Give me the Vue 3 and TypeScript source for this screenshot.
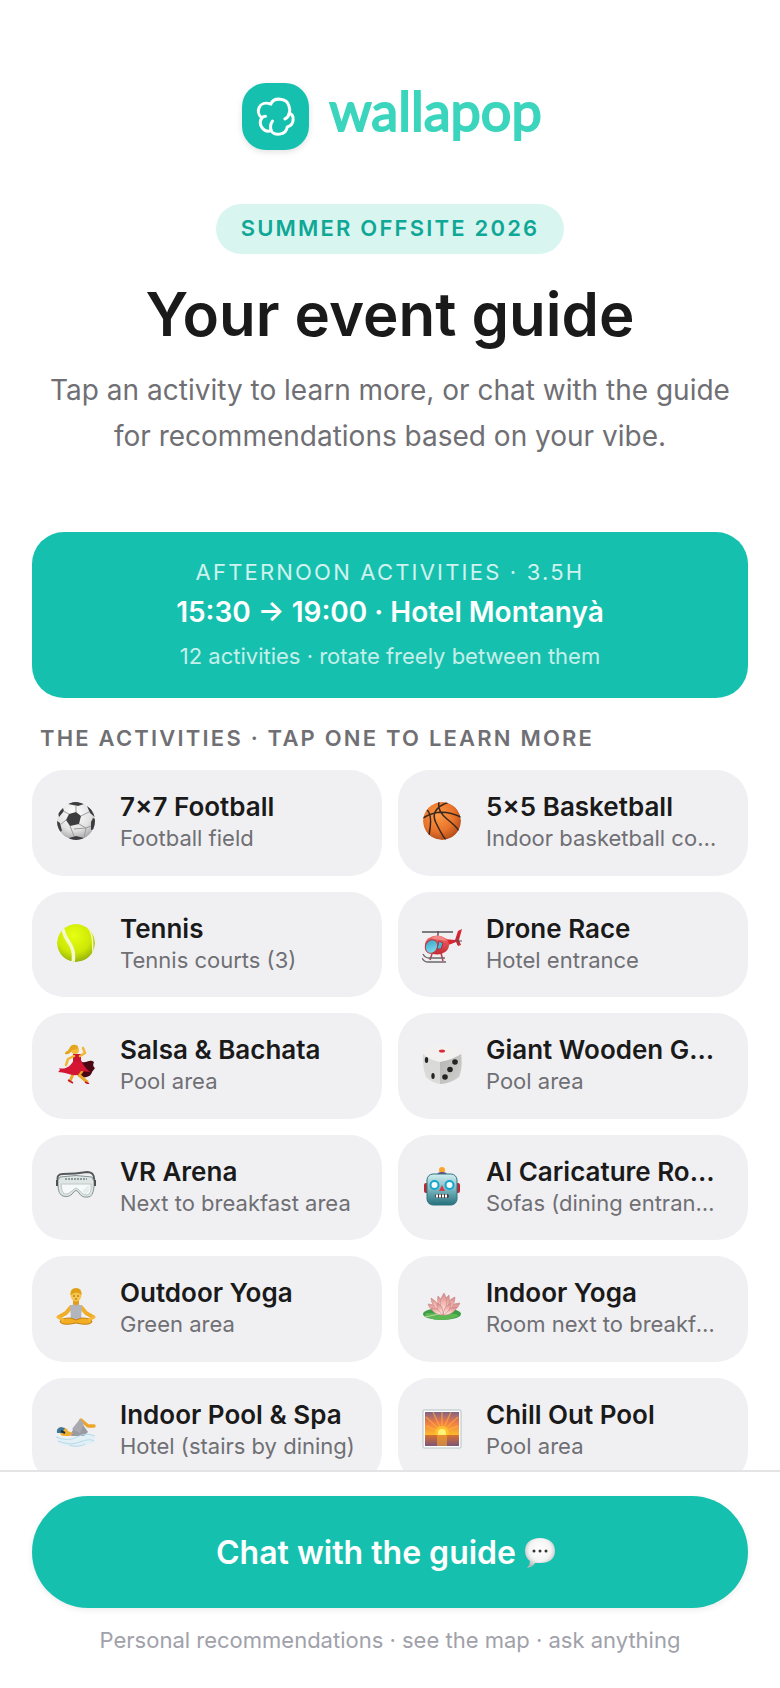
<script setup lang="ts">
import { ref } from 'vue'

interface Activity {
  icon: string
  name: string
  place: string
}

const activities: Activity[] = [
  { icon: 'football', name: '7×7 Football', place: 'Football field' },
  { icon: 'basketball', name: '5×5 Basketball', place: 'Indoor basketball court' },
  { icon: 'tennis', name: 'Tennis', place: 'Tennis courts (3)' },
  { icon: 'helicopter', name: 'Drone Race', place: 'Hotel entrance' },
  { icon: 'dancer', name: 'Salsa & Bachata', place: 'Pool area' },
  { icon: 'dice', name: 'Giant Wooden Games', place: 'Pool area' },
  { icon: 'goggles', name: 'VR Arena', place: 'Next to breakfast area' },
  { icon: 'robot', name: 'AI Caricature Robot', place: 'Sofas (dining entrance)' },
  { icon: 'yoga', name: 'Outdoor Yoga', place: 'Green area' },
  { icon: 'lotus', name: 'Indoor Yoga', place: 'Room next to breakfast' },
  { icon: 'swimmer', name: 'Indoor Pool & Spa', place: 'Hotel (stairs by dining)' },
  { icon: 'sunset', name: 'Chill Out Pool', place: 'Pool area' },
]

const selected = ref<string | null>(null)
</script>

<template>
  <div class="page">
    <main class="content">
      <header class="intro">
        <div class="brand">
          <span class="brand-mark">
            <svg viewBox="0 0 200 200" aria-hidden="true">
              <g fill="none" stroke="#fff" stroke-width="9" stroke-linecap="round" stroke-linejoin="round">
                <path d="M86 63C94 42 134 43 140 68C143 76 143 84 141 90C158 96 157 126 135 131C132 158 93 158 87 142C66 150 46 125 59 104C38 87 51 50 86 63Z" />
                <path d="M141 90Q139 102 128 107M87 142Q82 126 91 114M59 104Q64 99 70 99" />
              </g>
            </svg>
          </span>
          <span class="wordmark">wallapop</span>
        </div>
        <p class="badge">SUMMER OFFSITE 2026</p>
        <h1>Your event guide</h1>
        <p class="lead">Tap an activity to learn more, or chat with the guide for recommendations based on your vibe.</p>
      </header>

      <section class="banner">
        <p class="banner-label">AFTERNOON ACTIVITIES · 3.5H</p>
        <p class="banner-time">15:30 → 19:00 · Hotel Montanyà</p>
        <p class="banner-note">12 activities · rotate freely between them</p>
      </section>

      <h2>THE ACTIVITIES · TAP ONE TO LEARN MORE</h2>
      <div class="grid">
        <button v-for="a in activities" :key="a.name" type="button" class="card" @click="selected = a.name">
          <svg class="icon" viewBox="0 0 40 40" aria-hidden="true">
            <defs>
              <radialGradient id="ballWhite" cx=".45" cy=".3" r=".75"><stop offset="0" stop-color="#fff" /><stop offset=".6" stop-color="#e2e2e2" /><stop offset="1" stop-color="#9c9c9c" /></radialGradient>
              <radialGradient id="ballOrange" cx=".4" cy=".35" r=".7"><stop offset="0" stop-color="#fb9a48" /><stop offset=".6" stop-color="#e8732a" /><stop offset="1" stop-color="#ae4a1b" /></radialGradient>
              <radialGradient id="ballLime" cx=".45" cy=".3" r=".75"><stop offset="0" stop-color="#e6ff12" /><stop offset=".6" stop-color="#cde805" /><stop offset="1" stop-color="#8da810" /></radialGradient>
              <linearGradient id="redBody" x1="0" y1="0" x2="0" y2="1"><stop offset="0" stop-color="#f2696a" /><stop offset="1" stop-color="#c42b34" /></linearGradient>
              <linearGradient id="glassBlue" x1="0" y1="0" x2="1" y2="1"><stop offset="0" stop-color="#2f9fc2" /><stop offset="1" stop-color="#8ee6f7" /></linearGradient>
              <linearGradient id="robotFace" x1="0" y1="0" x2="0" y2="1"><stop offset="0" stop-color="#d2eff0" /><stop offset=".5" stop-color="#79b7bf" /><stop offset="1" stop-color="#25707c" /></linearGradient>
              <linearGradient id="dieSide" x1="0" y1="0" x2="1" y2="1"><stop offset="0" stop-color="#b4b4b2" /><stop offset="1" stop-color="#d0d0ce" /></linearGradient>
              <linearGradient id="petal" x1="0" y1="0" x2="0" y2="1"><stop offset="0" stop-color="#cf8585" /><stop offset=".45" stop-color="#f3b5b0" /><stop offset="1" stop-color="#fdf3f0" /></linearGradient>
              <linearGradient id="sky" x1="0" y1="0" x2="0" y2="1"><stop offset="0" stop-color="#806286" /><stop offset=".45" stop-color="#f07a46" /><stop offset="1" stop-color="#fdbb2c" /></linearGradient>
              <linearGradient id="sea" x1="0" y1="0" x2="0" y2="1"><stop offset="0" stop-color="#d9702f" /><stop offset="1" stop-color="#7c5678" /></linearGradient>
              <clipPath id="ballClip"><circle cx="20" cy="20" r="19" /></clipPath>
            </defs>

            <g v-if="a.icon === 'football'" clip-path="url(#ballClip)">
              <circle cx="20" cy="20" r="19" fill="url(#ballWhite)" />
              <g fill="#3d3d3f">
                <path d="M13 13L20 11L25 15L23 23L14 25L10 19Z" />
                <path d="M12 3L19 0L28 3L22 5L17 4ZM31 5L40 12V17L34 12ZM35 21L37 17L40 18V28L35 29ZM13 37L20 35L28 37L24 40H15ZM1 20L4 22L6 30L3 31L0 24ZM2 12L7 7L8 10L3 16Z" />
              </g>
              <path d="M13 13L7 10M20 11L20 4M25 15L33 11M23 23L30 27L35 25M14 25L18 35M10 19L4 24M18 28L30 27L28 37" fill="none" stroke="#9b9b9b" />
            </g>

            <g v-else-if="a.icon === 'basketball'" clip-path="url(#ballClip)">
              <circle cx="20" cy="20" r="19" fill="url(#ballOrange)" />
              <path d="M1 17Q18 6 39 16M27 1Q7 8 14 22T24 39M17 1Q15 10 25 18T37 30M5 9Q11 14 7 34" fill="none" stroke="#39271d" stroke-width="1.500" />
            </g>

            <g v-else-if="a.icon === 'tennis'" clip-path="url(#ballClip)">
              <circle cx="20" cy="20" r="19" fill="url(#ballLime)" />
              <path d="M7 6C9 20 20 20 17 40" fill="none" stroke="#f5f8cf" stroke-width="3.500" />
              <path d="M31 3C38 11 36 20 37 30" fill="none" stroke="#f2f6c4" stroke-width="1.500" />
            </g>

            <g v-else-if="a.icon === 'helicopter'">
              <path d="M0 9H31M16 8V14" stroke="#55555b" stroke-width="1.500" />
              <path d="M22 16L33 17L36 8L40 6L37 17L39 22L36 23L34 19L24 23Z" fill="#d9252f" />
              <path d="M36 13V22M33 18H40" stroke="#6f4a52" />
              <ellipse cx="15" cy="22" rx="12" ry="9.500" fill="url(#redBody)" />
              <path d="M9 15Q16 10 22 15L25 18L12 16Z" fill="#f38686" />
              <ellipse cx="9.500" cy="23.500" rx="6" ry="7" transform="rotate(30 9.500 23.500)" fill="url(#glassBlue)" stroke="#b83840" />
              <path d="M17 18L21 20L19 26L15 26Z" fill="#45b8d5" stroke="#b52c36" />
              <path d="M10 31L8 37M19 30L21 38" stroke="#bf3b41" stroke-width="1.500" />
              <path d="M1 31Q3 35 7 35H23M0 35Q2 39 6 39H24" fill="none" stroke="#6b6669" stroke-width="1.300" />
            </g>

            <g v-else-if="a.icon === 'dancer'">
              <path d="M24 17C30 21 33 14 38 18Q36 22 39 24L36 28C35 33 28 35 22 32Z" fill="#4a0613" />
              <path d="M18 28L14 37M26 27L23 31L31 38" fill="none" stroke="#e9a629" stroke-width="3" stroke-linecap="round" />
              <path d="M18 16L25 16C27 21 30 25 34 28L25 27L22 31C15 32 9 28 2 28Q5 26 3 24C9 26 14 23 18 16Z" fill="#d51632" />
              <path d="M17 10L25 10L25 18H17Z" fill="#cc1430" />
              <path d="M12 36L17 39M29 38L33 40" stroke="#c5162e" stroke-width="1.500" />
              <path d="M18 12L12 15L10 21M24 12L29 9L27 4" fill="none" stroke="#f1b634" stroke-width="2.500" stroke-linecap="round" stroke-linejoin="round" />
              <circle cx="19" cy="6" r="4" fill="#f4bc3d" />
              <path d="M22 2C17-1 14 2 13 5C11 8 9 7 9 10C12 11 15 9 16 6L21 5Z" fill="#e2a61f" />
            </g>

            <g v-else-if="a.icon === 'dice'">
              <path d="M1 9Q10 14 18 17L19 40Q10 39 4 33Q0 22 1 9Z" fill="#dadad8" />
              <path d="M18 16Q30 13 39 9Q41 24 37 33Q28 40 18 40Z" fill="url(#dieSide)" />
              <path d="M1 10Q1 7 4 6Q14 1 20 2Q31 2 37 6Q39 7 39 10Q32 15 18 18Q6 15 1 10Z" fill="#f2f1ef" />
              <ellipse cx="20" cy="7" rx="3" ry="1.500" fill="#dd2a32" />
              <g fill="#242424"><ellipse cx="4.500" cy="16" rx="1.700" ry="3" /><ellipse cx="11" cy="32" rx="1.700" ry="3" /><circle cx="33" cy="18" r="2.800" /><circle cx="28" cy="25.500" r="2.800" /><circle cx="23" cy="33" r="2.800" /></g>
            </g>

            <g v-else-if="a.icon === 'goggles'">
              <path d="M2 15Q0 8 7 8Q20 8 31 6Q39 6 38 15" fill="none" stroke="#55595b" stroke-width="2" />
              <path d="M4 11Q20 8 36 11Q39 15 38 21Q37 31 32 31Q26 32 23 27Q20 22 17 27Q13 32 7 30Q2 28 2 19Q1 14 4 11Z" fill="#dfe5e5" stroke="#849394" />
              <path d="M5 18H35Q36 28 31 29Q26 29 23 24Q20 20 16 25Q12 29 8 28Q5 25 5 18Z" fill="#f6f9f9" stroke="#bdc7c7" />
              <path d="M9 13H31" stroke="#8c9a9c" stroke-width="2" stroke-dasharray="2 1" />
              <path d="M1 14V20M39 14V20" stroke="#4e5253" stroke-width="2" />
              <path d="M26 25L33 19V25L30 28Z" fill="#e5eded" />
            </g>

            <g v-else-if="a.icon === 'robot'">
              <circle cx="20" cy="4" r="3" fill="#f9a52b" />
              <path d="M15 9Q15 6 20 6Q25 6 25 9Z" fill="#674b88" />
              <rect x="2" y="17" width="5" height="10" rx="2" fill="#ba2a34" />
              <rect x="33" y="17" width="5" height="10" rx="2" fill="#ba2a34" />
              <rect x="5" y="8" width="30" height="31" rx="6" fill="url(#robotFace)" stroke="#2e7481" />
              <g fill="#f6feff" stroke="#16a5cf" stroke-width="2"><circle cx="12.500" cy="19" r="4" /><circle cx="27.500" cy="19" r="4" /></g>
              <path d="M20 19L23 25H17Z" fill="#d53c4b" />
              <rect x="13" y="28" width="14" height="4" rx="2" fill="#433b40" />
              <path d="M14 30H26" stroke="#fff" stroke-width="3" stroke-dasharray="2 1" />
            </g>

            <g v-else-if="a.icon === 'yoga'">
              <path d="M17 11H23V18H17Z" fill="#e39d1c" />
              <path d="M15 19L10 25L3 29M25 19L30 25L37 29" fill="none" stroke="#f0ad26" stroke-width="4" stroke-linecap="round" stroke-linejoin="round" />
              <path d="M14 18L18 16Q20 19 22 16L26 18L25 32H15Z" fill="#b3b5bd" />
              <path d="M15 30Q4 30 4 34Q7 38 20 35Q33 38 36 34Q36 30 25 30L20 32Z" fill="#f2ad22" stroke="#c48111" />
              <path d="M2 29L7 32M38 29L33 32" stroke="#f5b735" stroke-width="3" stroke-linecap="round" />
              <ellipse cx="20" cy="7" rx="5.500" ry="6.500" fill="#f8c44b" />
              <path d="M14.500 7Q14 0 20 0Q26 0 25.500 7Q21 2 14.500 7Z" fill="#dfa016" />
              <path d="M17 8H19M21 8H23M19 11H21" stroke="#9a6413" />
            </g>

            <g v-else-if="a.icon === 'lotus'">
              <ellipse cx="20" cy="26" rx="19" ry="6" fill="#3c9e45" />
              <path d="M3 28Q17 36 37 28L34 26L4 25Z" fill="#5db853" />
              <path d="M3 29L17 26" stroke="#b4d7a0" />
              <g fill="url(#petal)" stroke="#c98483" stroke-width=".6">
                <path d="M20 26Q8 24 6 16Q15 16 20 26ZM22 26Q28 15 38 15Q35 24 22 26Z" />
                <path d="M20 26Q9 18 9 10Q18 15 20 26ZM22 26Q24 12 33 9Q33 20 22 26Z" />
                <path d="M20 26Q14 14 16 8Q23 14 22 26ZM20 26Q20 12 27 7Q29 17 22 26Z" />
                <path d="M21 26Q15 14 22 5Q28 14 21 26Z" />
                <path d="M21 27Q12 27 9 20Q17 19 21 27Q26 18 35 19Q30 28 21 27Z" />
                <path d="M21 27Q14 22 15 15Q22 18 21 27ZM21 27Q22 18 29 15Q29 23 21 27Z" />
              </g>
            </g>

            <g v-else-if="a.icon === 'swimmer'">
              <path d="M0 26Q13 34 22 27T39 27V33Q24 42 2 34Z" fill="#e2f0f6" />
              <path d="M14 26Q19 16 25 13L32 23L28 27H16Z" fill="#999ba3" />
              <path d="M25 11L32 17L38 17" fill="none" stroke="#efa52a" stroke-width="3.500" stroke-linejoin="round" stroke-linecap="round" />
              <path d="M16 20L24 10L28 14L24 24Z" fill="#a8aab0" />
              <path d="M9 21L17 24L14 27L8 27Z" fill="#efae34" />
              <circle cx="8" cy="23" r="4" fill="#efae34" />
              <path d="M1 24Q0 19 5 18L9 19L6 24Z" fill="#3f7595" />
              <path d="M5 22L9 24" stroke="#172b41" stroke-width="2" />
              <path d="M0 28Q12 33 21 28T39 27M2 32Q14 37 24 33T38 32M13 36Q22 39 29 35" fill="none" stroke="#b5dbea" />
            </g>

            <g v-else>
              <rect x="1" y="1" width="38" height="38" rx="1" fill="#fff" stroke="#b4c2c4" />
              <rect x="3" y="3" width="34" height="23" fill="url(#sky)" />
              <path d="M20 23L4 8M20 23L11 3M20 23L20 3M20 23L29 3M20 23L36 8M20 23L4 17M20 23L36 17" stroke="#ffb33e" stroke-width="1.500" opacity=".6" />
              <circle cx="20" cy="24" r="7" fill="#ffc72d" opacity=".8" />
              <circle cx="20" cy="24" r="4" fill="#fff279" />
              <rect x="3" y="26" width="34" height="11" fill="url(#sea)" />
              <rect x="15" y="26" width="10" height="11" fill="#f8a62b" opacity=".6" />
            </g>
          </svg>
          <span class="card-text">
            <span class="card-name">{{ a.name }}</span>
            <span class="card-place">{{ a.place }}</span>
          </span>
        </button>
      </div>
    </main>

    <footer class="footer">
      <button type="button" class="chat">
        <span>Chat with the guide</span>
        <svg class="bubble" viewBox="0 0 40 32" aria-hidden="true">
          <defs><radialGradient id="bubbleFill" cx=".5" cy=".4" r=".6"><stop offset="0" stop-color="#fff" /><stop offset=".6" stop-color="#f4f4f4" /><stop offset="1" stop-color="#b5b8b8" /></radialGradient></defs>
          <path d="M16 1C25 1 31 6 31 14C31 22 25 26 17 26H11Q9 30 3 31Q6 28 6 24C3 22 1 18 1 14C1 6 7 1 16 1Z" fill="url(#bubbleFill)" />
          <g fill="#343434"><circle cx="10" cy="14" r="1.500" /><circle cx="16" cy="14" r="1.500" /><circle cx="22" cy="14" r="1.500" /></g>
        </svg>
      </button>
      <p class="hint">Personal recommendations · see the map · ask anything</p>
    </footer>
  </div>
</template>

<style>
html,
body {
  height: 100%;
}
body {
  margin: 0;
  background: #fff;
}
#app {
  height: 100%;
}
</style>

<style scoped>
.page {
  height: 100%;
  display: flex;
  flex-direction: column;
  font-family: Inter, "Liberation Sans", sans-serif;
  color: #1a1a1a;
  -webkit-font-smoothing: antialiased;
}
.page * {
  box-sizing: border-box;
}
p,
h1,
h2 {
  margin: 0;
}
button {
  border: 0;
  font: inherit;
  color: inherit;
  cursor: pointer;
}
.content {
  flex: 1;
  min-height: 0;
  overflow-y: auto;
  scrollbar-width: none;
  padding: 83px 32px 24px;
}
.intro {
  display: flex;
  flex-direction: column;
  align-items: center;
  text-align: center;
  padding-bottom: 73px;
}
.brand {
  display: flex;
  align-items: center;
  gap: 20px;
  padding-left: 4px;
}
.brand-mark {
  width: 67px;
  height: 67px;
  border-radius: 24px;
  background: #15c1ae;
  box-shadow: 0 2px 6px rgba(0, 0, 0, 0.12);
}
.brand-mark svg {
  display: block;
  width: 100%;
}
.wordmark {
  padding-bottom: 12px;
  font-family: Lato, sans-serif;
  font-size: 54px;
  line-height: 54px;
  font-weight: 400;
  color: #3bd5bd;
  -webkit-text-stroke: 2px #3bd5bd;
}
.badge {
  margin-top: 54px;
  padding: 0 25px 2px;
  border-radius: 25px;
  background: #d9f5f0;
  color: #0fa796;
  font-size: 22px;
  line-height: 48px;
  font-weight: 600;
  letter-spacing: 0.1em;
}
h1 {
  margin-top: 23px;
  font-size: 60px;
  line-height: 75px;
  font-weight: 600;
}
.lead {
  margin-top: 15px;
  font-size: 28px;
  line-height: 46px;
  color: #6f6f74;
}
.banner {
  border-radius: 32px;
  padding: 24px;
  background: #15c1ae;
  color: #fff;
  text-align: center;
}
.banner-label {
  font-size: 22px;
  line-height: 33px;
  letter-spacing: 0.1em;
  opacity: 0.8;
}
.banner-time {
  font-size: 28px;
  line-height: 46px;
  font-weight: 600;
}
.banner-note {
  padding: 5px 0 1px;
  font-size: 22px;
  line-height: 33px;
  opacity: 0.75;
}
h2 {
  padding: 24px 8px 15px;
  font-size: 22px;
  line-height: 33px;
  font-weight: 600;
  letter-spacing: 0.1em;
  color: #6f6f74;
}
.grid {
  display: grid;
  grid-template-columns: repeat(2, minmax(0, 1fr));
  gap: 16px;
}
.card {
  display: flex;
  align-items: center;
  gap: 24px;
  padding: 20px 24px 23px;
  border-radius: 32px;
  background: #f0f0f3;
  text-align: left;
}
.icon {
  flex: none;
  width: 40px;
  height: 40px;
}
.card-text {
  flex: 1;
  min-width: 0;
}
.card-name,
.card-place {
  display: block;
  overflow: hidden;
  white-space: nowrap;
  text-overflow: ellipsis;
}
.card-name {
  font-size: 26px;
  line-height: 34px;
  font-weight: 600;
}
.card-place {
  font-size: 22px;
  line-height: 1.3;
  color: #6f6f74;
}
.footer {
  border-top: 2px solid #e4e4e6;
  padding: 24px 32px 32px;
  background: #fff;
  text-align: center;
}
.chat {
  display: flex;
  width: 100%;
  align-items: center;
  justify-content: center;
  gap: 8px;
  border-radius: 56px;
  background: #15c1ae;
  color: #fff;
  font-size: 32px;
  line-height: 48px;
  font-weight: 600;
  padding: 33px 32px 31px;
  box-shadow: 0 2px 6px rgba(0, 0, 0, 0.08);
}
.bubble {
  width: 40px;
  height: 32px;
}
.hint {
  margin-top: 16px;
  font-size: 22px;
  line-height: 32px;
  color: #a1a1aa;
}
</style>
